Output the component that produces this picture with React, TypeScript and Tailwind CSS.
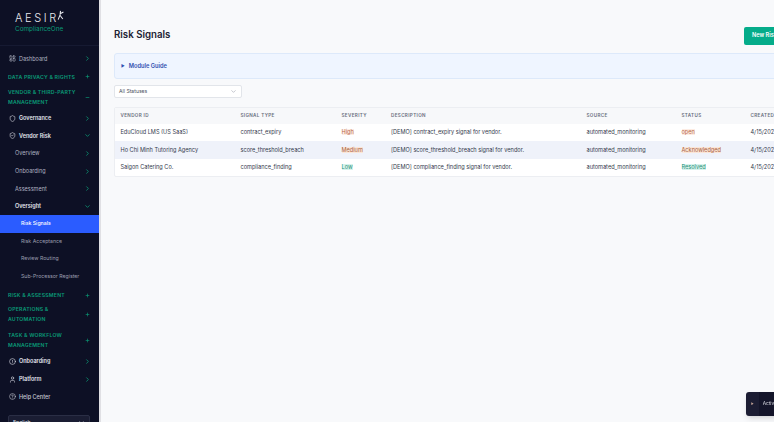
import { ChevronRight, ChevronDown, LayoutDashboard, ShieldCheck, Shield, CircleHelp, User, Plus, Minus, CircleAlert } from "lucide-react";

const Section = ({ label, open }: { label: string; open?: boolean }) => (
  <div className="flex items-center justify-between pl-2 pr-[9px] text-[5.2px] leading-[10.5px] font-semibold tracking-[0.2px] text-[#0a9b77]">
    <span className="w-[72px]">{label}</span>
    {open ? <Minus size={5} strokeWidth={3} /> : <Plus size={5} strokeWidth={3} />}
  </div>
);

const Item = ({ icon, label, open, bold }: { icon?: any; label: string; open?: boolean; bold?: boolean }) => (
  <div className={`flex h-[17.6px] items-center justify-between pr-[8.5px] text-[5.5px] ${icon ? "pl-[9px]" : "pl-[15px]"} ${bold ? "font-semibold text-[#e2e4ec]" : "text-[#b0b3c1]"}`}>
    <span className="flex items-center gap-[3px]">
      {icon}
      {label}
    </span>
    {open ? <ChevronDown size={7} strokeWidth={2.6} className="text-[#0a9b77]" /> : <ChevronRight size={7} strokeWidth={2.6} className="text-[#0a9b77]" />}
  </div>
);

const Sub = ({ label, active }: { label: string; active?: boolean }) => (
  <div className={`flex h-[17.5px] items-center pl-[21px] text-[5.2px] ${active ? "bg-[#2b5cff] font-medium text-white" : "text-[#9b9eae]"}`}>{label}</div>
);

const Th = ({ children, w }: { children?: string; w: string }) => (
  <th className={`${w} px-[5.5px] text-left text-[4.6px] font-semibold tracking-[0.35px] text-[#686d7c]`}>{children}</th>
);

const Pill = ({ children, tone }: { children: string; tone: "red" | "amber" | "green" }) => (
  <span className={tone === "red" ? "bg-[#fdece3] text-[#b9684a]" : tone === "amber" ? "bg-[#fbe6d8] text-[#a9623f]" : "bg-[#d6f3ec] text-[#2a9078]"}>{children}</span>
);

const rows = [
  ["EduCloud LMS (US SaaS)", "contract_expiry", "High", "red", "open", "red", ""],
  ["Ho Chi Minh Tutoring Agency", "score_threshold_breach", "Medium", "amber", "Acknowledged", "amber", "bg-[#eff2fa]"],
  ["Saigon Catering Co.", "compliance_finding", "Low", "green", "Resolved", "green", ""],
] as const;

export default function App() {
  return (
    <div className="flex h-[422px] w-[774px] overflow-hidden bg-[#f8f9fb] font-['Inter',sans-serif]">
      <aside className="h-full w-[101px] shrink-0 overflow-hidden border-r-2 border-[#e0e0e4] bg-[#0d1025]">
        <div className="flex h-[46px] flex-col border-b border-[#161a32] pt-[12px] pl-[15px]">
          <div className="flex items-start text-[11px] leading-[13px] font-light tracking-[2.6px] text-[#e8e9ee]">
            AESIR
            <svg width="7" height="11" viewBox="0 0 6 9" className="-ml-[2px] -mt-[2px]" fill="none" stroke="#e8e9ee" strokeWidth="0.9">
              <path d="M3 0.5 L2.6 4 L1 8 M2.7 3 L5.5 1.5 M2.7 4.5 L5 7.5" />
            </svg>
          </div>
          <div className="mt-[0px] text-[6.4px] leading-[9px] text-[#0a9b77]">ComplianceOne</div>
        </div>
        <div className="pt-[4px]">
          <Item icon={<LayoutDashboard size={7} />} label="Dashboard" />
        </div>
        <div className="flex flex-col">
          <div className="h-[4px]" />
          <Section label="DATA PRIVACY & RIGHTS" />
          <div className="h-[4.5px]" />
          <Section label="VENDOR & THIRD-PARTY MANAGEMENT" open />
          <div className="h-[2px]" />
          <Item icon={<Shield size={7} />} label="Governance" bold />
          <Item icon={<ShieldCheck size={7} />} label="Vendor Risk" open bold />
          <Item label="Overview" />
          <Item label="Onboarding" />
          <Item label="Assessment" />
          <Item label="Oversight" open bold />
          <Sub label="Risk Signals" active />
          <Sub label="Risk Acceptance" />
          <Sub label="Review Routing" />
          <Sub label="Sub-Processor Register" />
          <div className="h-[5px]" />
          <Section label="RISK & ASSESSMENT" />
          <div className="h-[3px]" />
          <Section label="OPERATIONS & AUTOMATION" />
          <div className="h-[5px]" />
          <Section label="TASK & WORKFLOW MANAGEMENT" />
          <div className="h-[2px]" />
          <Item icon={<CircleAlert size={7} />} label="Onboarding" bold />
          <Item icon={<User size={7} />} label="Platform" bold />
          <div className="flex h-[17.6px] items-center gap-[3px] pl-[9px] text-[5.5px] font-medium text-[#c6c8d2]">
            <CircleHelp size={7} />
            Help Center
          </div>
          <div className="mr-[9px] ml-2 mt-[10px] flex h-[14px] items-center justify-between rounded-[2px] border border-[#2a2e45] bg-[#1a1d33] px-[4px] text-[5.2px] text-[#dfe1e8]">
            English
            <ChevronDown size={7} />
          </div>
        </div>
      </aside>
      <main className="min-w-0 flex-1 pl-[13px] pt-[26.5px]">
        <div className="flex h-[18px] w-[690px] items-center justify-between">
          <h1 className="text-[9.7px] font-semibold text-[#1c2233]">Risk Signals</h1>
          <div className="flex h-[18px] w-[60px] items-center rounded-[2px] bg-[#05ac8a] pl-[8px] text-[5.6px] font-semibold whitespace-nowrap text-white">New Risk Signal</div>
        </div>
        <div className="mt-[8.5px] flex h-[26px] w-[700px] items-center gap-[4px] rounded-[3px] border border-[#dde9fa] bg-[#eff5ff] pl-[6px] text-[5.7px] font-semibold text-[#2f4fb0]">
          <span className="text-[4px]">▶</span>
          Module Guide
        </div>
        <div className="mt-[6px] flex h-[13px] w-[128px] items-center justify-between rounded-[2px] border border-[#e2e5ea] bg-white px-[4px] text-[5.1px] text-[#4e5362]">
          All Statuses
          <ChevronDown size={7} className="text-[#9ca0ac]" />
        </div>
        <div className="mt-[9px] w-[700px] overflow-hidden rounded-[2px] border border-[#eceef2] bg-white">
          <table className="w-full table-fixed border-collapse text-[5.6px] text-[#333a4c]">
            <thead>
              <tr className="h-[16px] bg-[#f7f8fa]">
                <Th w="w-[120px]">VENDOR ID</Th>
                <Th w="w-[101px]">SIGNAL TYPE</Th>
                <Th w="w-[49.5px]">SEVERITY</Th>
                <Th w="w-[195.5px]">DESCRIPTION</Th>
                <Th w="w-[95px]">SOURCE</Th>
                <Th w="w-[69px]">STATUS</Th>
                <Th w="w-[70px]">CREATED</Th>
              </tr>
            </thead>
            <tbody>
              {rows.map((r) => (
                <tr key={r[0]} className={`h-[17.3px] ${r[6]}`}>
                  <td className="px-[5.5px] whitespace-nowrap">{r[0]}</td>
                  <td className="px-[5.5px] whitespace-nowrap">{r[1]}</td>
                  <td className="px-[5.5px]"><Pill tone={r[3]}>{r[2]}</Pill></td>
                  <td className="px-[5.5px] whitespace-nowrap">[DEMO] {r[1]} signal for vendor.</td>
                  <td className="px-[5.5px]">automated_monitoring</td>
                  <td className="px-[5.5px]"><Pill tone={r[5]}>{r[4]}</Pill></td>
                  <td className="px-[5.5px]">4/15/2026</td>
                </tr>
              ))}
            </tbody>
          </table>
        </div>
      </main>
      <div className="fixed top-[392px] left-[746px] flex h-[24px] w-[60px] items-center gap-[5px] rounded-[3px] bg-[#1c1d33] pl-[5px] shadow-md">
        <span className="text-[3px] text-[#c9a89a]">▶</span>
        <span className="flex h-full items-center bg-[#14152a] pl-[4px] text-[4.8px] text-[#d8d9e2]">Activating</span>
      </div>
    </div>
  );
}
